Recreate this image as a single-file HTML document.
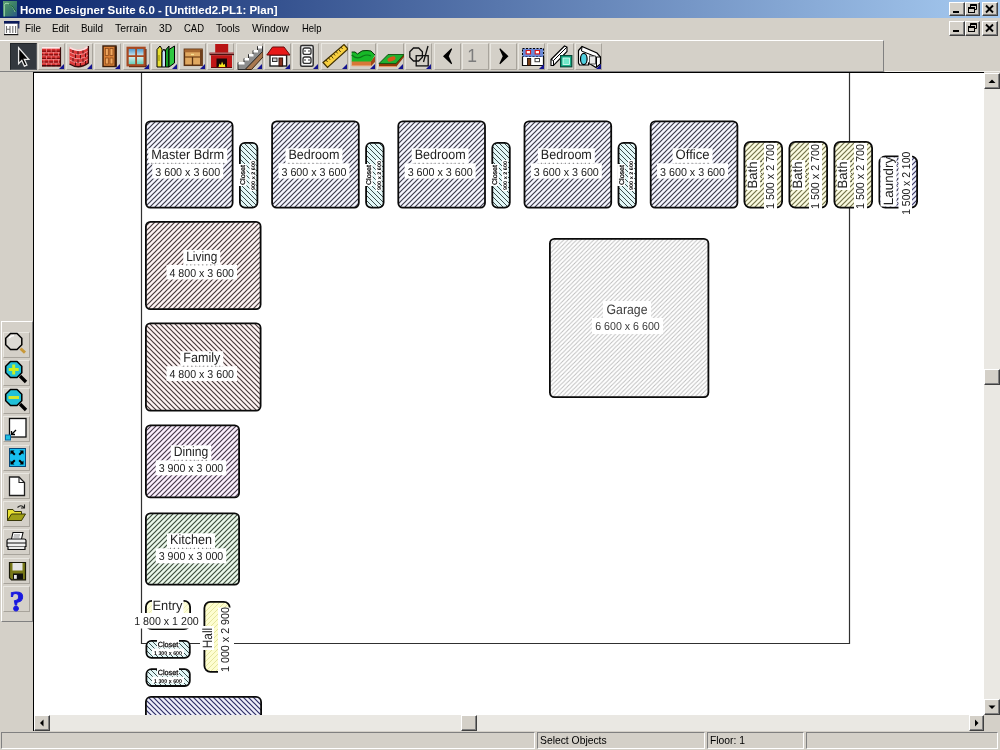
<!DOCTYPE html>
<html><head><meta charset="utf-8"><title>Home Designer Suite 6.0 - [Untitled2.PL1: Plan]</title>
<style>
*{box-sizing:border-box;margin:0;padding:0}
html,body{width:1000px;height:750px;overflow:hidden;background:#d4d0c8;font-family:"Liberation Sans",sans-serif;}
#app{position:relative;width:1000px;height:750px;overflow:hidden;background:#d4d0c8}
#canvas svg text{text-rendering:geometricPrecision}
#canvas svg,#menu,#title .t,#status,.b svg,.lb svg{will-change:transform}
.abs{position:absolute}
#title{left:0;top:0;width:1000px;height:18px;background:linear-gradient(to right,#0a246a 0%,#a6caf0 100%)}
#title .t{position:absolute;left:20px;top:1.5px;color:#fff;font-weight:bold;font-size:11.5px;line-height:16px;white-space:nowrap;letter-spacing:0px}
.cb{position:absolute;width:15px;height:14px;background:#d4d0c8;border:1px solid;border-color:#fff #404040 #404040 #fff;box-shadow:inset -1px -1px 0 #808080}
#menu{left:0;top:19px;width:1000px;height:21px;background:#d4d0c8}
#menu span{position:absolute;top:3px;font-size:11px;line-height:13px;color:#000;white-space:nowrap;transform-origin:0 0;display:inline-block}
#tb{left:0;top:40px;width:884px;height:32px;background:#d4d0c8;border-top:1px solid #fff;border-right:1px solid #808080;border-bottom:1px solid #808080}
.b{position:absolute;top:43px;width:27px;height:27px;border:1px solid;border-color:#e8e6e0 #a8a49c #a8a49c #e8e6e0}
.b svg{position:absolute;left:0;top:0}
.tri{position:absolute;right:0;bottom:0;width:0;height:0;border-left:5px solid transparent;border-bottom:5px solid #141490}
#left{left:0;top:72px;width:33px;height:661px;background:#d4d0c8}
#ltb{left:1px;top:321px;width:32px;height:301px;border:1px solid;border-color:#fff #808080 #808080 #fff;background:#d4d0c8}
.lb{position:absolute;left:4px;width:27px;height:26px;border:1px solid;border-color:#e8e6e0 #a8a49c #a8a49c #e8e6e0}
#canvas{left:33px;top:72px;width:951px;height:643px;background:#fff;border-left:1px solid #000;border-top:1px solid #000;overflow:hidden}
.sbtrack{background:#eae8e3}
.sbbtn{position:absolute;background:#d4d0c8;border:1px solid;border-color:#fff #404040 #404040 #fff;box-shadow:inset -1px -1px 0 #808080}
#status{left:0;top:731px;width:1000px;height:19px;background:#d4d0c8}
.pane{position:absolute;top:1px;height:17px;border:1px solid;border-color:#808080 #fff #fff #808080;font-size:11px;line-height:13px;padding-left:2px;padding-top:1px;color:#000;white-space:nowrap}
.pane span{display:inline-block;transform-origin:0 0;transform:scaleX(.94)}
</style></head><body><div id="app">
<div id="title" class="abs"><svg width="14" height="16" viewBox="0 0 14 16" style="position:absolute;left:3px;top:1px"><defs><linearGradient id="ga" x1="0" y1="0" x2="1" y2="1"><stop offset="0" stop-color="#5c9c70"/><stop offset=".5" stop-color="#3c8068"/><stop offset="1" stop-color="#2c5888"/></linearGradient></defs><rect x="0" y="0" width="14" height="15.5" fill="url(#ga)"/><path d="M1.3,15.5 V4.5 Q1.3,2 4,2.2 Q9.5,3 12.2,11" fill="none" stroke="#a0d8a8" stroke-width="1"/><path d="M6,2.8 Q10.5,5 12.8,10.5" fill="none" stroke="#0c5c28" stroke-width=".9"/></svg><div class="t">Home Designer Suite 6.0 - [Untitled2.PL1: Plan]</div></div>
<div class="cb" style="left:949px;top:2px;width:16px;height:14px"><svg width="13" height="12" viewBox="0 0 13 12" style="position:absolute;left:0;top:0"><rect x="3" y="8" width="6" height="2" fill="#000"/></svg></div><div class="cb" style="left:965px;top:2px;width:15px;height:14px"><svg width="13" height="12" viewBox="0 0 13 12" style="position:absolute;left:0;top:0"><path d="M4.5,1.5 H10.5 V6.5 H8 M4.5,1.5 V4" fill="none" stroke="#000" stroke-width="1"/><path d="M4.5,2 H10.5" stroke="#000" stroke-width="2"/><rect x="2.5" y="4.5" width="6" height="5" fill="none" stroke="#000" stroke-width="1"/><path d="M2.5,5 H8.5" stroke="#000" stroke-width="2"/></svg></div><div class="cb" style="left:982px;top:2px;width:16px;height:14px"><svg width="13" height="12" viewBox="0 0 13 12" style="position:absolute;left:0;top:0"><path d="M3,2.5 L10,9.5 M10,2.5 L3,9.5" stroke="#000" stroke-width="1.9"/></svg></div>
<div id="menu" class="abs"><svg width="16" height="15" viewBox="0 0 16 15" style="position:absolute;left:4px;top:2.3px"><rect x="0.5" y="2" width="13" height="11.5" fill="#fff" stroke="#b0b0b0" stroke-width="1"/><rect x="0" y="0" width="15.3" height="2.6" fill="#0a1a5a"/><rect x="14" y="0" width="1.3" height="7.5" fill="#0a1a5a"/><path d="M13.8,3 V13 " stroke="#909090" stroke-width="1" fill="none"/><path d="M0,13.6 H14.3" stroke="#181818" stroke-width="1.2"/><path d="M2.5,5 v7 M2.5,8.2 h3.5 M6,5 v7 M8.8,5 v7 M11.6,5 v7" stroke="#707070" stroke-width="1.1" fill="none"/></svg><span style="left:24.5px;transform:scaleX(0.903)">File</span><span style="left:52px;transform:scaleX(0.896)">Edit</span><span style="left:81px;transform:scaleX(0.899)">Build</span><span style="left:115px;transform:scaleX(0.951)">Terrain</span><span style="left:159px;transform:scaleX(0.925)">3D</span><span style="left:184px;transform:scaleX(0.861)">CAD</span><span style="left:216px;transform:scaleX(0.934)">Tools</span><span style="left:252px;transform:scaleX(0.946)">Window</span><span style="left:301.5px;transform:scaleX(0.862)">Help</span></div>
<div class="cb" style="left:949px;top:21px;width:16px;height:15px"><svg width="13" height="12" viewBox="0 0 13 12" style="position:absolute;left:0;top:0"><rect x="3" y="8" width="6" height="2" fill="#000"/></svg></div><div class="cb" style="left:965px;top:21px;width:15px;height:15px"><svg width="13" height="12" viewBox="0 0 13 12" style="position:absolute;left:0;top:0"><path d="M4.5,1.5 H10.5 V6.5 H8 M4.5,1.5 V4" fill="none" stroke="#000" stroke-width="1"/><path d="M4.5,2 H10.5" stroke="#000" stroke-width="2"/><rect x="2.5" y="4.5" width="6" height="5" fill="none" stroke="#000" stroke-width="1"/><path d="M2.5,5 H8.5" stroke="#000" stroke-width="2"/></svg></div><div class="cb" style="left:982px;top:21px;width:16px;height:15px"><svg width="13" height="12" viewBox="0 0 13 12" style="position:absolute;left:0;top:0"><path d="M3,2.5 L10,9.5 M10,2.5 L3,9.5" stroke="#000" stroke-width="1.9"/></svg></div>
<div id="tb" class="abs"></div>
<div class="b" style="left:10px;background:#33383e;border-color:#202428 #585c60 #585c60 #202428"><svg width="27" height="27" viewBox="0 0 27 27" style="position:absolute;left:-1px;top:-1px"><path d="M8.6,4.7 V20.6 L11.8,17.4 L14.4,23.2 L16.9,22.1 L14.3,16.3 H18.8 Z" fill="#000" stroke="#e8e8e8" stroke-width="1.3" stroke-linejoin="miter"/></svg></div><div class="b" style="left:38px"><svg width="27" height="27" viewBox="0 0 27 27" style="position:absolute;left:-1px;top:-1px"><rect x="4" y="4.2" width="19" height="19" fill="#f08c8c"/><rect x="4" y="4.2" width="19" height="1.2" fill="#fff"/><rect x="4.00" y="5.90" width="4.00" height="2.90" fill="#d83030"/><rect x="4.00" y="7.60" width="4.00" height="1.2" fill="#7a0c0c"/><rect x="8.80" y="5.90" width="4.00" height="2.90" fill="#d83030"/><rect x="8.80" y="7.60" width="4.00" height="1.2" fill="#7a0c0c"/><rect x="13.60" y="5.90" width="4.00" height="2.90" fill="#d83030"/><rect x="13.60" y="7.60" width="4.00" height="1.2" fill="#7a0c0c"/><rect x="18.40" y="5.90" width="4.00" height="2.90" fill="#d83030"/><rect x="18.40" y="7.60" width="4.00" height="1.2" fill="#7a0c0c"/><rect x="4.00" y="9.50" width="1.60" height="2.90" fill="#d83030"/><rect x="4.00" y="11.20" width="1.60" height="1.2" fill="#7a0c0c"/><rect x="6.40" y="9.50" width="4.00" height="2.90" fill="#d83030"/><rect x="6.40" y="11.20" width="4.00" height="1.2" fill="#7a0c0c"/><rect x="11.20" y="9.50" width="4.00" height="2.90" fill="#d83030"/><rect x="11.20" y="11.20" width="4.00" height="1.2" fill="#7a0c0c"/><rect x="16.00" y="9.50" width="4.00" height="2.90" fill="#d83030"/><rect x="16.00" y="11.20" width="4.00" height="1.2" fill="#7a0c0c"/><rect x="20.80" y="9.50" width="2.20" height="2.90" fill="#d83030"/><rect x="20.80" y="11.20" width="2.20" height="1.2" fill="#7a0c0c"/><rect x="4.00" y="13.10" width="4.00" height="2.90" fill="#d83030"/><rect x="4.00" y="14.80" width="4.00" height="1.2" fill="#7a0c0c"/><rect x="8.80" y="13.10" width="4.00" height="2.90" fill="#d83030"/><rect x="8.80" y="14.80" width="4.00" height="1.2" fill="#7a0c0c"/><rect x="13.60" y="13.10" width="4.00" height="2.90" fill="#d83030"/><rect x="13.60" y="14.80" width="4.00" height="1.2" fill="#7a0c0c"/><rect x="18.40" y="13.10" width="4.00" height="2.90" fill="#d83030"/><rect x="18.40" y="14.80" width="4.00" height="1.2" fill="#7a0c0c"/><rect x="4.00" y="16.70" width="1.60" height="2.90" fill="#d83030"/><rect x="4.00" y="18.40" width="1.60" height="1.2" fill="#7a0c0c"/><rect x="6.40" y="16.70" width="4.00" height="2.90" fill="#d83030"/><rect x="6.40" y="18.40" width="4.00" height="1.2" fill="#7a0c0c"/><rect x="11.20" y="16.70" width="4.00" height="2.90" fill="#d83030"/><rect x="11.20" y="18.40" width="4.00" height="1.2" fill="#7a0c0c"/><rect x="16.00" y="16.70" width="4.00" height="2.90" fill="#d83030"/><rect x="16.00" y="18.40" width="4.00" height="1.2" fill="#7a0c0c"/><rect x="20.80" y="16.70" width="2.20" height="2.90" fill="#d83030"/><rect x="20.80" y="18.40" width="2.20" height="1.2" fill="#7a0c0c"/><rect x="4.00" y="20.30" width="4.00" height="2.90" fill="#d83030"/><rect x="4.00" y="22.00" width="4.00" height="1.2" fill="#7a0c0c"/><rect x="8.80" y="20.30" width="4.00" height="2.90" fill="#d83030"/><rect x="8.80" y="22.00" width="4.00" height="1.2" fill="#7a0c0c"/><rect x="13.60" y="20.30" width="4.00" height="2.90" fill="#d83030"/><rect x="13.60" y="22.00" width="4.00" height="1.2" fill="#7a0c0c"/><rect x="18.40" y="20.30" width="4.00" height="2.90" fill="#d83030"/><rect x="18.40" y="22.00" width="4.00" height="1.2" fill="#7a0c0c"/><path d="M22.5,4.2 V23.2 M4,22.8 H23" stroke="#3a0a0a" stroke-width="1.2"/></svg><i class="tri"></i></div><div class="b" style="left:66px"><svg width="27" height="27" viewBox="0 0 27 27" style="position:absolute;left:-1px;top:-1px"><path d="M3.5,4 Q13,10 22.4,3 V20 Q13,27 3.5,21 Z" fill="#de3c3c"/><path d="M3.5,4.6 Q13,10.6 22.4,3.6" fill="none" stroke="#fde0e0" stroke-width="1.8"/><path d="M3.5,9 Q13,15 22.4,8 M3.5,13 Q13,19 22.4,12 M3.5,17 Q13,23 22.4,16" fill="none" stroke="#f4a0a0" stroke-width=".9"/><path d="M7,7 v3 M12,8 v3.5 M17,7.5 v3 M9.5,11.5 v3.5 M14.5,12 v3.5 M19.5,10.5 v3.5 M7,15 v3.5 M12,16.5 v3.5 M17,15.5 v3.5 M9.5,19.5 v3 M14.5,20 v3 M19.5,18 v3.5" stroke="#5a1010" stroke-width="1"/><path d="M22.4,3 V20 Q13,27 3.5,21" fill="none" stroke="#3a0a0a" stroke-width="1.3"/></svg><i class="tri"></i></div><div class="b" style="left:94px"><svg width="27" height="27" viewBox="0 0 27 27" style="position:absolute;left:-1px;top:-1px"><rect x="9" y="3" width="13" height="20.5" fill="#d88038" stroke="#3a1c08" stroke-width="1.4"/><rect x="20.5" y="3.5" width="2.2" height="20" fill="#3a1c08"/><rect x="11.3" y="5.5" width="3" height="7" fill="#f0a860" stroke="#8a4818" stroke-width=".8"/><rect x="16" y="5.5" width="3" height="7" fill="#f0a860" stroke="#8a4818" stroke-width=".8"/><rect x="11.3" y="15" width="3" height="6" fill="#f0a860" stroke="#8a4818" stroke-width=".8"/><rect x="16" y="15" width="3" height="6" fill="#f0a860" stroke="#8a4818" stroke-width=".8"/></svg><i class="tri"></i></div><div class="b" style="left:123px"><svg width="27" height="27" viewBox="0 0 27 27" style="position:absolute;left:-1px;top:-1px"><defs><linearGradient id="gw" x1="0" y1="0" x2="0" y2="1"><stop offset="0" stop-color="#3c8cc8"/><stop offset=".5" stop-color="#d8f0f0"/><stop offset="1" stop-color="#58c8b0"/></linearGradient></defs><rect x="6" y="22" width="17.5" height="2.2" fill="#4a1c08"/><rect x="21.5" y="6" width="2" height="17" fill="#4a1c08"/><rect x="4.6" y="4.8" width="17" height="17.5" fill="url(#gw)" stroke="#a84820" stroke-width="2.2"/><path d="M13.1,5 V22 M5,13.2 H21.5" stroke="#a84820" stroke-width="1.8"/></svg><i class="tri"></i></div><div class="b" style="left:151px"><svg width="27" height="27" viewBox="0 0 27 27" style="position:absolute;left:-1px;top:-1px"><path d="M6,6.5 L9,3 L11,6 V24 H6 Z" fill="#e8e030" stroke="#000" stroke-width="1"/><path d="M11,9 L13,6 L14.5,9 V24 H11 Z" fill="#c8e0f8" stroke="#000" stroke-width="1"/><path d="M14.5,7 L18,3 V24 H14.5 Z" fill="#18a028" stroke="#000" stroke-width="1"/><path d="M18,6.5 L23.5,3 V20 L18,24 Z" fill="#30c840" stroke="#000" stroke-width="1"/><path d="M8,12 v6" stroke="#a09810" stroke-width="1.2"/></svg><i class="tri"></i></div><div class="b" style="left:179px"><svg width="27" height="27" viewBox="0 0 27 27" style="position:absolute;left:-1px;top:-1px"><rect x="5.4" y="6.3" width="17.6" height="16" fill="#e0a860" stroke="#5a3010" stroke-width="1.5"/><rect x="5.4" y="6.3" width="17.6" height="3" fill="#a86830"/><rect x="21" y="7" width="2.6" height="15.5" fill="#70401c"/><path d="M6,14 H21" stroke="#7a4818" stroke-width="1.3"/><path d="M13.5,14 V22" stroke="#5a3010" stroke-width="1.3"/><path d="M12,11.5 h3" stroke="#f8e090" stroke-width="1.3"/></svg><i class="tri"></i></div><div class="b" style="left:207px"><svg width="27" height="27" viewBox="0 0 27 27" style="position:absolute;left:-1px;top:-1px"><rect x="8.2" y="1" width="13" height="9" fill="#b81414"/><rect x="2.5" y="9.6" width="24.5" height="2.6" fill="#4a1010"/><rect x="3" y="9.6" width="24" height="1" fill="#e89090"/><rect x="4" y="12.2" width="21" height="12.5" fill="#c01616"/><rect x="9.5" y="15.5" width="10.5" height="9.2" fill="#180808"/><path d="M11.5,24 L12.5,20.5 L14,22 L15,18.5 L16.5,22 L17.8,20.8 L18.3,24 Z" fill="#f8e820"/><path d="M4,24.5 H25" stroke="#5a0808" stroke-width="1"/></svg></div><div class="b" style="left:236px"><svg width="27" height="27" viewBox="0 0 27 27" style="position:absolute;left:-1px;top:-1px"><path d="M9,26.5 L27,8 V14 L15.5,26.5 Z" fill="#a87850" stroke="#3a2410" stroke-width="1"/><path d="M2,19.5 H8 V15.5 H12.5 V11.5 H17 V7.5 H21.5 V3.5 H26.5 V8.5 L9,26.5 H2 Z" fill="#8c8c8c" stroke="#303030" stroke-width="1"/><path d="M2.5,20.2 H8.5 M8.5,16.2 H13 M13,12.2 H17.5 M17.5,8.2 H22 M22,4.2 H26" stroke="#fff" stroke-width="2.4"/></svg><i class="tri"></i></div><div class="b" style="left:264px"><svg width="27" height="27" viewBox="0 0 27 27" style="position:absolute;left:-1px;top:-1px"><rect x="6" y="12" width="16.6" height="11" fill="#fff" stroke="#202020" stroke-width="1.4"/><path d="M2.8,12 L8.5,4 H20 L26,12 Z" fill="#e81818" stroke="#6a0808" stroke-width="1"/><rect x="15" y="15" width="3.6" height="8" fill="#8a3020" stroke="#301008" stroke-width="1"/><rect x="8.5" y="15" width="4.5" height="3.5" fill="#d0d0d0" stroke="#303030" stroke-width="1"/></svg><i class="tri"></i></div><div class="b" style="left:292px"><svg width="27" height="27" viewBox="0 0 27 27" style="position:absolute;left:-1px;top:-1px"><rect x="8.6" y="2.6" width="12.6" height="20.6" rx="1.5" fill="#f4f4f4" stroke="#303030" stroke-width="1.5"/><rect x="11" y="5" width="8" height="6.4" rx="2" fill="#fff" stroke="#303030" stroke-width="1.3"/><rect x="11" y="14" width="8" height="6.4" rx="2" fill="#fff" stroke="#303030" stroke-width="1.3"/><path d="M13,7 v2 M17,7 v2 M13,16 v2 M17,16 v2" stroke="#303030" stroke-width="1"/></svg><i class="tri"></i></div><div class="b" style="left:321px"><svg width="27" height="27" viewBox="0 0 27 27" style="position:absolute;left:-1px;top:-1px"><path d="M2,19.5 L23,1.5 L27,6 L6.5,24.5 Z" fill="#f8d040" stroke="#403000" stroke-width="1.2"/><path d="M5,17 l1.6,2 M7.5,14.8 l1.6,2 M10,12.6 l2.2,2.8 M12.5,10.5 l1.6,2 M15,8.4 l1.6,2 M17.5,6.2 l2.2,2.8 M20,4 l1.6,2" stroke="#403000" stroke-width=".9"/></svg><i class="tri"></i></div><div class="b" style="left:349px"><svg width="27" height="27" viewBox="0 0 27 27" style="position:absolute;left:-1px;top:-1px"><path d="M2.7,18 H22 L26,14 V18 L22,23 H2.7 Z" fill="#d87838"/><path d="M22,18 L26,13 V19 L22,23 Z" fill="#a04818"/><path d="M2.7,9 L6,9 L8.5,11 Q13,6.5 18,7.5 L22,8 L26,12 L22,18.5 H2.7 Z" fill="#18b828"/><path d="M2.7,9 L6,9 L8.5,11 Q13,6.5 18,7.5 L22,8 L26,12" fill="none" stroke="#083808" stroke-width="1"/><path d="M2.7,12 Q8,17 14,13 Q18,11 22,13" fill="none" stroke="#0c7818" stroke-width="1.2"/><path d="M2.7,22.8 H22" stroke="#e8a880" stroke-width="1"/></svg><i class="tri"></i></div><div class="b" style="left:377px"><svg width="27" height="27" viewBox="0 0 27 27" style="position:absolute;left:-1px;top:-1px"><path d="M2,21 L11,11.5 H27 V14 L19,24 H2 Z" fill="#903808"/><path d="M2,20.5 L11,11.5 H27 L19,20.5 Z" fill="#20b030" stroke="#085010" stroke-width=".8"/><ellipse cx="14.5" cy="16" rx="4.2" ry="2.2" fill="#d85818" transform="rotate(-20 14.5 16)"/><path d="M2,23.6 H19" stroke="#f0a070" stroke-width="1"/></svg><i class="tri"></i></div><div class="b" style="left:405px"><svg width="27" height="27" viewBox="0 0 27 27" style="position:absolute;left:-1px;top:-1px"><path d="M8.5,5 H13.7 L17.4,8.7 V14.3 L13.7,18 H8.5 L4.8,14.3 V8.7 Z" fill="none" stroke="#101010" stroke-width="1.3"/><rect x="11.2" y="12.7" width="12" height="10.2" fill="none" stroke="#101010" stroke-width="1.3"/><path d="M23,3 L18.5,19" stroke="#101010" stroke-width="1.3"/></svg><i class="tri"></i></div><div class="b" style="left:434px"><svg width="27" height="27" viewBox="0 0 27 27" style="position:absolute;left:-1px;top:-1px"><path d="M9,13.2 L17.4,5.3 L18.1,6 L14.8,13.2 L18.1,20.5 L17.4,21.2 Z" fill="#000"/></svg></div><div class="b" style="left:462px"><svg width="27" height="27" viewBox="0 0 27 27" style="position:absolute;left:-1px;top:-1px"><text x="10.2" y="19" font-size="17.5" text-anchor="middle" fill="#7c7c7c" font-family="Liberation Sans, sans-serif">1</text></svg></div><div class="b" style="left:490px"><svg width="27" height="27" viewBox="0 0 27 27" style="position:absolute;left:-1px;top:-1px"><path d="M18.5,13.2 L10.1,5.3 L9.4,6 L12.7,13.2 L9.4,20.5 L10.1,21.2 Z" fill="#000"/></svg></div><div class="b" style="left:518px"><svg width="27" height="27" viewBox="0 0 27 27" style="position:absolute;left:-1px;top:-1px"><rect x="4.5" y="5.5" width="21" height="8.5" fill="#6888d8" stroke="#000" stroke-width="1" stroke-dasharray="2 1.5"/><rect x="4.5" y="14" width="21" height="8.5" fill="#fff"/><path d="M4.5,14 V22.5 H25.5 V14" fill="none" stroke="#101010" stroke-width="1.2"/><rect x="8.2" y="7.5" width="4.3" height="3.4" fill="#fff" stroke="#d81818" stroke-width="1.1"/><rect x="17.2" y="7.5" width="4.3" height="3.4" fill="#fff" stroke="#d81818" stroke-width="1.1"/><rect x="9.5" y="15.5" width="3.2" height="7" fill="#7a4018" stroke="#201008" stroke-width=".9"/><rect x="17" y="15.5" width="4.5" height="3.2" fill="#fff" stroke="#404040" stroke-width="1"/></svg><i class="tri"></i></div><div class="b" style="left:547px"><svg width="27" height="27" viewBox="0 0 27 27" style="position:absolute;left:-1px;top:-1px"><path d="M4,16.5 L17.5,3 L20,4 V8.5 L6.5,22.5 H4 Z" fill="#fff" stroke="#000" stroke-width="1.1"/><path d="M6.5,22.5 V17.5 L20,4 M4,16.5 L6.5,17.5" fill="none" stroke="#000" stroke-width="1"/><rect x="13.6" y="12.6" width="11.2" height="11.2" fill="#18b088" stroke="#084838" stroke-width="1.2"/><rect x="16" y="15" width="6.4" height="6.4" fill="#70e8c8" stroke="#e8fff8" stroke-width=".8"/></svg></div><div class="b" style="left:575px"><svg width="27" height="27" viewBox="0 0 27 27" style="position:absolute;left:-1px;top:-1px"><path d="M3.5,7.5 L7,3.5 L22,10 L25.5,14 V21 L21,24.5 L13.5,20 V22 H4.5 L3.5,20 Z" fill="#fff" stroke="#000" stroke-width="1.2"/><path d="M7,3.5 L6.5,8 L21.5,14 L25.5,14 M21.5,14 V24" fill="none" stroke="#000" stroke-width="1"/><rect x="14.5" y="13" width="6" height="8" fill="#e8e8e8" stroke="#303030" stroke-width=".8"/><ellipse cx="8.8" cy="16" rx="3.3" ry="5.6" fill="#50d0e0" stroke="#000" stroke-width="1.2"/></svg><i class="tri"></i></div>
<div id="left" class="abs"><div id="ltb" class="abs" style="top:249px"><div class="lb" style="top:10px;left:1px"><svg width="26" height="26" viewBox="0 0 26 26" style="position:absolute;left:0px;top:-1px"><path d="M16.5,16.5 L21,20.6" stroke="#c89838" stroke-width="3"/><path d="M6.5,1.5 H13 L17.8,6.3 V12.7 L13,17.5 H6.5 L1.7,12.7 V6.3 Z" fill="#dcdad4" stroke="#000" stroke-width="1.5"/><path d="M5,6 Q7,3.5 10,3.5" stroke="#fff" stroke-width="1.5" fill="none"/></svg></div><div class="lb" style="top:38px;left:1px"><svg width="26" height="26" viewBox="0 0 26 26" style="position:absolute;left:0px;top:-1px"><path d="M16,16 L22,22" stroke="#000" stroke-width="3.4"/><path d="M6.5,1.5 H13 L17.8,6.3 V12.7 L13,17.5 H6.5 L1.7,12.7 V6.3 Z" fill="#20c0d8" stroke="#000" stroke-width="1.5"/><path d="M9.7,4.5 V14.5 M4.7,9.5 H14.7" stroke="#c8f020" stroke-width="3"/></svg></div><div class="lb" style="top:66px;left:1px"><svg width="26" height="26" viewBox="0 0 26 26" style="position:absolute;left:0px;top:-1px"><path d="M16,16 L22,22" stroke="#000" stroke-width="3.4"/><path d="M6.5,1.5 H13 L17.8,6.3 V12.7 L13,17.5 H6.5 L1.7,12.7 V6.3 Z" fill="#20c0d8" stroke="#000" stroke-width="1.5"/><path d="M4.5,9.5 H15" stroke="#d0e830" stroke-width="3"/></svg></div><div class="lb" style="top:94px;left:1px"><svg width="26" height="26" viewBox="0 0 26 26" style="position:absolute;left:0px;top:-1px"><rect x="5.5" y="2.5" width="16.5" height="18.5" fill="#fff" stroke="#101010" stroke-width="1.3"/><rect x="1.5" y="19" width="5" height="5" fill="#20c0e0" stroke="#0868a0" stroke-width="1"/><path d="M12,14 L7.5,18.5 M7.5,15 V18.5 H11" stroke="#000" stroke-width="1.3" fill="none"/></svg></div><div class="lb" style="top:123px;left:1px"><svg width="26" height="26" viewBox="0 0 26 26" style="position:absolute;left:0px;top:-1px"><rect x="5.5" y="3.5" width="16" height="18" fill="#18c0f0" stroke="#084878" stroke-width="1"/><path d="M6.5,5.5 h4 l-1.3,1.3 l2.3,2.3 l-1.4,1.4 l-2.3,-2.3 l-1.3,1.3 Z M19.5,5.5 v4 l-1.3,-1.3 l-2.3,2.3 l-1.4,-1.4 l2.3,-2.3 l-1.3,-1.3 Z M6.5,19.5 v-4 l1.3,1.3 l2.3,-2.3 l1.4,1.4 l-2.3,2.3 l1.3,1.3 Z M19.5,19.5 h-4 l1.3,-1.3 l-2.3,-2.3 l1.4,-1.4 l2.3,2.3 l1.3,-1.3 Z" fill="#000"/></svg></div><div class="lb" style="top:151px;left:1px"><svg width="26" height="26" viewBox="0 0 26 26" style="position:absolute;left:0px;top:-1px"><path d="M5.5,4 H15 L20.5,9.5 V22.5 H5.5 Z" fill="#fff" stroke="#202020" stroke-width="1.3"/><path d="M15,4 V9.5 H20.5" fill="none" stroke="#202020" stroke-width="1.1"/></svg></div><div class="lb" style="top:179px;left:1px"><svg width="26" height="26" viewBox="0 0 26 26" style="position:absolute;left:0px;top:-1px"><path d="M3.5,8.5 H9 L10.5,10.5 H17.5 V19.5 H3.5 Z" fill="#e8e030" stroke="#383808" stroke-width="1"/><path d="M3.5,19.5 L7.5,13 H21.5 L17.5,19.5 Z" fill="#a0a018" stroke="#383808" stroke-width="1"/><path d="M13.5,6.5 Q17,3 20,6.5 M20.5,3.5 V7 H17" fill="none" stroke="#202020" stroke-width="1.1"/></svg></div><div class="lb" style="top:207px;left:1px"><svg width="26" height="26" viewBox="0 0 26 26" style="position:absolute;left:0px;top:-1px"><path d="M7.5,10 L9,3.5 H19 L17.5,10" fill="#fff" stroke="#101010" stroke-width="1.1"/><path d="M10,6 h6 M9.5,8 h6" stroke="#808080" stroke-width=".9"/><path d="M3,11.5 Q3,10 5,10 H20 Q22,10 22,11.5 V17.5 H3 Z" fill="#f0f0f0" stroke="#101010" stroke-width="1.2"/><path d="M3,14 H22" stroke="#101010" stroke-width="1"/><path d="M4,17.5 V20.5 H21 V17.5" fill="#d8d8d8" stroke="#101010" stroke-width="1.2"/><path d="M5,19 H20" stroke="#fff" stroke-width="1"/></svg></div><div class="lb" style="top:236px;left:1px"><svg width="26" height="26" viewBox="0 0 26 26" style="position:absolute;left:0px;top:-1px"><path d="M5.5,4.5 H21.5 V21.8 H7.5 L5.5,19.8 Z" fill="#787818" stroke="#181808" stroke-width="1.2"/><rect x="8.5" y="5" width="10" height="7.5" fill="#e4e4e4"/><rect x="9" y="15.5" width="10" height="6" fill="#101010"/><rect x="10" y="17" width="2.8" height="3.8" fill="#e8e8e8"/></svg></div><div class="lb" style="top:264px;left:1px"><svg width="26" height="26" viewBox="0 0 26 26" style="position:absolute;left:0px;top:-1px"><text x="13" y="24.5" font-size="30" font-weight="bold" text-anchor="middle" fill="#1818e0" stroke="#1818e0" stroke-width=".9" font-family="Liberation Serif, serif">?</text></svg></div></div></div>
<div id="canvas" class="abs"><svg class="abs" style="left:0;top:0" width="950" height="642" viewBox="0 0 950 642" font-family='"Liberation Sans", sans-serif'><defs><pattern id="hBed" width="5.0" height="5.0" patternUnits="userSpaceOnUse"><rect width="5.0" height="5.0" fill="#f5f5fe"/><path d="M-5.0,5.0 L5.0,-5.0 M0,5.0 L5.0,0 M0,10.0 L10.0,0" stroke="#3c3c4a" stroke-width="1.2" fill="none"/></pattern><pattern id="hClo" width="5.0" height="5.0" patternUnits="userSpaceOnUse"><rect width="5.0" height="5.0" fill="#e2f7f7"/><path d="M-5.0,-5.0 L5.0,5.0 M0,0 L5.0,5.0 M-5.0,0 L5.0,10.0 M0,-5.0 L10.0,5.0" stroke="#3c4c4c" stroke-width="1.0" fill="none"/></pattern><pattern id="hBath" width="5.0" height="5.0" patternUnits="userSpaceOnUse"><rect width="5.0" height="5.0" fill="#fbfbe0"/><path d="M-5.0,5.0 L5.0,-5.0 M0,5.0 L5.0,0 M0,10.0 L10.0,0" stroke="#74744c" stroke-width="1.2" fill="none"/></pattern><pattern id="hLiv" width="5.0" height="5.0" patternUnits="userSpaceOnUse"><rect width="5.0" height="5.0" fill="#fef3f3"/><path d="M-5.0,5.0 L5.0,-5.0 M0,5.0 L5.0,0 M0,10.0 L10.0,0" stroke="#463a3a" stroke-width="1.2" fill="none"/></pattern><pattern id="hFam" width="5.0" height="5.0" patternUnits="userSpaceOnUse"><rect width="5.0" height="5.0" fill="#fef3f3"/><path d="M-5.0,-5.0 L5.0,5.0 M0,0 L5.0,5.0 M-5.0,0 L5.0,10.0 M0,-5.0 L10.0,5.0" stroke="#463a3a" stroke-width="1.2" fill="none"/></pattern><pattern id="hDin" width="5.0" height="5.0" patternUnits="userSpaceOnUse"><rect width="5.0" height="5.0" fill="#fbeffd"/><path d="M-5.0,5.0 L5.0,-5.0 M0,5.0 L5.0,0 M0,10.0 L10.0,0" stroke="#463a4a" stroke-width="1.2" fill="none"/></pattern><pattern id="hKit" width="5.0" height="5.0" patternUnits="userSpaceOnUse"><rect width="5.0" height="5.0" fill="#eaf7ea"/><path d="M-5.0,5.0 L5.0,-5.0 M0,5.0 L5.0,0 M0,10.0 L10.0,0" stroke="#3e4e3e" stroke-width="1.2" fill="none"/></pattern><pattern id="hGar" width="4.3" height="4.3" patternUnits="userSpaceOnUse"><rect width="4.3" height="4.3" fill="#ffffff"/><path d="M-4.3,4.3 L4.3,-4.3 M0,4.3 L4.3,0 M0,8.6 L8.6,0" stroke="#bcbcbc" stroke-width="0.9" fill="none"/></pattern><pattern id="hHall" width="5.0" height="5.0" patternUnits="userSpaceOnUse"><rect width="5.0" height="5.0" fill="#fdfdd0"/><path d="M-5.0,5.0 L5.0,-5.0 M0,5.0 L5.0,0 M0,10.0 L10.0,0" stroke="#e4e49c" stroke-width="1.0" fill="none"/></pattern><pattern id="hEnt" width="5.0" height="5.0" patternUnits="userSpaceOnUse"><rect width="5.0" height="5.0" fill="#fdfdd8"/><path d="M-5.0,5.0 L5.0,-5.0 M0,5.0 L5.0,0 M0,10.0 L10.0,0" stroke="#eeeeb8" stroke-width="1.0" fill="none"/></pattern><pattern id="hBot" width="5.0" height="5.0" patternUnits="userSpaceOnUse"><rect width="5.0" height="5.0" fill="#eeeefa"/><path d="M-5.0,-5.0 L5.0,5.0 M0,0 L5.0,5.0 M-5.0,0 L5.0,10.0 M0,-5.0 L10.0,5.0" stroke="#2c2c64" stroke-width="1.2" fill="none"/></pattern><pattern id="hLau" width="5.0" height="5.0" patternUnits="userSpaceOnUse"><rect width="5.0" height="5.0" fill="#eeeefa"/><path d="M-5.0,5.0 L5.0,-5.0 M0,5.0 L5.0,0 M0,10.0 L10.0,0" stroke="#3c3c68" stroke-width="1.2" fill="none"/></pattern></defs><path d="M107.5,0 V570.5 H815.5 V0" fill="none" stroke="#303030" stroke-width="1.2"/><rect x="111.90" y="48.40" width="86.70" height="86.20" rx="4.5" ry="4.5" fill="url(#hBed)" stroke="#0a0a0a" stroke-width="1.8"/><rect x="114.25" y="75.30" width="79.00" height="15.00" fill="#fff"/><rect x="118.25" y="90.30" width="71.00" height="15.30" fill="#fff"/><line x1="117.25" y1="90.30" x2="190.25" y2="90.30" stroke="#666" stroke-width="1" stroke-dasharray="1 3"/><text x="153.75" y="86.30" text-anchor="middle" font-size="13.5" fill="#222" textLength="73" lengthAdjust="spacingAndGlyphs">Master Bdrm</text><text x="153.75" y="102.60" text-anchor="middle" font-size="11.5" fill="#222" textLength="65" lengthAdjust="spacingAndGlyphs">3 600 x 3 600</text><rect x="238.10" y="48.40" width="86.70" height="86.20" rx="4.5" ry="4.5" fill="url(#hBed)" stroke="#0a0a0a" stroke-width="1.8"/><rect x="251.45" y="75.30" width="57.00" height="15.00" fill="#fff"/><rect x="244.45" y="90.30" width="71.00" height="15.30" fill="#fff"/><line x1="254.45" y1="90.30" x2="305.45" y2="90.30" stroke="#666" stroke-width="1" stroke-dasharray="1 3"/><text x="279.95" y="86.30" text-anchor="middle" font-size="13.5" fill="#222" textLength="51" lengthAdjust="spacingAndGlyphs">Bedroom</text><text x="279.95" y="102.60" text-anchor="middle" font-size="11.5" fill="#222" textLength="65" lengthAdjust="spacingAndGlyphs">3 600 x 3 600</text><rect x="364.30" y="48.40" width="86.70" height="86.20" rx="4.5" ry="4.5" fill="url(#hBed)" stroke="#0a0a0a" stroke-width="1.8"/><rect x="377.65" y="75.30" width="57.00" height="15.00" fill="#fff"/><rect x="370.65" y="90.30" width="71.00" height="15.30" fill="#fff"/><line x1="380.65" y1="90.30" x2="431.65" y2="90.30" stroke="#666" stroke-width="1" stroke-dasharray="1 3"/><text x="406.15" y="86.30" text-anchor="middle" font-size="13.5" fill="#222" textLength="51" lengthAdjust="spacingAndGlyphs">Bedroom</text><text x="406.15" y="102.60" text-anchor="middle" font-size="11.5" fill="#222" textLength="65" lengthAdjust="spacingAndGlyphs">3 600 x 3 600</text><rect x="490.50" y="48.40" width="86.70" height="86.20" rx="4.5" ry="4.5" fill="url(#hBed)" stroke="#0a0a0a" stroke-width="1.8"/><rect x="503.85" y="75.30" width="57.00" height="15.00" fill="#fff"/><rect x="496.85" y="90.30" width="71.00" height="15.30" fill="#fff"/><line x1="506.85" y1="90.30" x2="557.85" y2="90.30" stroke="#666" stroke-width="1" stroke-dasharray="1 3"/><text x="532.35" y="86.30" text-anchor="middle" font-size="13.5" fill="#222" textLength="51" lengthAdjust="spacingAndGlyphs">Bedroom</text><text x="532.35" y="102.60" text-anchor="middle" font-size="11.5" fill="#222" textLength="65" lengthAdjust="spacingAndGlyphs">3 600 x 3 600</text><rect x="616.70" y="48.40" width="86.70" height="86.20" rx="4.5" ry="4.5" fill="url(#hBed)" stroke="#0a0a0a" stroke-width="1.8"/><rect x="638.55" y="75.30" width="40.00" height="15.00" fill="#fff"/><rect x="623.05" y="90.30" width="71.00" height="15.30" fill="#fff"/><line x1="641.55" y1="90.30" x2="675.55" y2="90.30" stroke="#666" stroke-width="1" stroke-dasharray="1 3"/><text x="658.55" y="86.30" text-anchor="middle" font-size="13.5" fill="#222" textLength="34" lengthAdjust="spacingAndGlyphs">Office</text><text x="658.55" y="102.60" text-anchor="middle" font-size="11.5" fill="#222" textLength="65" lengthAdjust="spacingAndGlyphs">3 600 x 3 600</text><rect x="205.90" y="69.90" width="17.50" height="64.70" rx="5" ry="5" fill="url(#hClo)" stroke="#0a0a0a" stroke-width="1.8"/><rect x="204.50" y="91.00" width="8.00" height="22.00" fill="#fff"/><rect x="215.50" y="87.00" width="6.00" height="31.00" fill="#fff"/><text transform="translate(211.00,102.00) rotate(-90)" text-anchor="middle" font-size="6.8" fill="#000" textLength="20" lengthAdjust="spacingAndGlyphs" stroke="#000" stroke-width="0.25">Closet</text><text transform="translate(220.80,102.50) rotate(-90)" text-anchor="middle" font-size="5.2" fill="#000" textLength="29" lengthAdjust="spacingAndGlyphs" font-weight="bold">900 x 2 600</text><rect x="332.10" y="69.90" width="17.50" height="64.70" rx="5" ry="5" fill="url(#hClo)" stroke="#0a0a0a" stroke-width="1.8"/><rect x="330.70" y="91.00" width="8.00" height="22.00" fill="#fff"/><rect x="341.70" y="87.00" width="6.00" height="31.00" fill="#fff"/><text transform="translate(337.20,102.00) rotate(-90)" text-anchor="middle" font-size="6.8" fill="#000" textLength="20" lengthAdjust="spacingAndGlyphs" stroke="#000" stroke-width="0.25">Closet</text><text transform="translate(347.00,102.50) rotate(-90)" text-anchor="middle" font-size="5.2" fill="#000" textLength="29" lengthAdjust="spacingAndGlyphs" font-weight="bold">900 x 2 600</text><rect x="458.30" y="69.90" width="17.50" height="64.70" rx="5" ry="5" fill="url(#hClo)" stroke="#0a0a0a" stroke-width="1.8"/><rect x="456.90" y="91.00" width="8.00" height="22.00" fill="#fff"/><rect x="467.90" y="87.00" width="6.00" height="31.00" fill="#fff"/><text transform="translate(463.40,102.00) rotate(-90)" text-anchor="middle" font-size="6.8" fill="#000" textLength="20" lengthAdjust="spacingAndGlyphs" stroke="#000" stroke-width="0.25">Closet</text><text transform="translate(473.20,102.50) rotate(-90)" text-anchor="middle" font-size="5.2" fill="#000" textLength="29" lengthAdjust="spacingAndGlyphs" font-weight="bold">900 x 2 600</text><rect x="584.50" y="69.90" width="17.50" height="64.70" rx="5" ry="5" fill="url(#hClo)" stroke="#0a0a0a" stroke-width="1.8"/><rect x="583.10" y="91.00" width="8.00" height="22.00" fill="#fff"/><rect x="594.10" y="87.00" width="6.00" height="31.00" fill="#fff"/><text transform="translate(589.60,102.00) rotate(-90)" text-anchor="middle" font-size="6.8" fill="#000" textLength="20" lengthAdjust="spacingAndGlyphs" stroke="#000" stroke-width="0.25">Closet</text><text transform="translate(599.40,102.50) rotate(-90)" text-anchor="middle" font-size="5.2" fill="#000" textLength="29" lengthAdjust="spacingAndGlyphs" font-weight="bold">900 x 2 600</text><rect x="710.40" y="68.90" width="37.70" height="65.70" rx="6" ry="6" fill="url(#hBath)" stroke="#0a0a0a" stroke-width="1.8"/><rect x="713.00" y="87.00" width="13.00" height="30.00" fill="#fff"/><rect x="730.00" y="70.00" width="13.00" height="68.00" fill="#fff"/><line x1="727.50" y1="88.00" x2="727.50" y2="116.00" stroke="#666" stroke-width="1" stroke-dasharray="1 3"/><text transform="translate(723.30,102.00) rotate(-90)" text-anchor="middle" font-size="13.5" fill="#222" textLength="27" lengthAdjust="spacingAndGlyphs">Bath</text><text transform="translate(740.00,103.50) rotate(-90)" text-anchor="middle" font-size="11.5" fill="#222" textLength="65" lengthAdjust="spacingAndGlyphs">1 500 x 2 700</text><rect x="755.40" y="68.90" width="37.70" height="65.70" rx="6" ry="6" fill="url(#hBath)" stroke="#0a0a0a" stroke-width="1.8"/><rect x="758.00" y="87.00" width="13.00" height="30.00" fill="#fff"/><rect x="775.00" y="70.00" width="13.00" height="68.00" fill="#fff"/><line x1="772.50" y1="88.00" x2="772.50" y2="116.00" stroke="#666" stroke-width="1" stroke-dasharray="1 3"/><text transform="translate(768.30,102.00) rotate(-90)" text-anchor="middle" font-size="13.5" fill="#222" textLength="27" lengthAdjust="spacingAndGlyphs">Bath</text><text transform="translate(785.00,103.50) rotate(-90)" text-anchor="middle" font-size="11.5" fill="#222" textLength="65" lengthAdjust="spacingAndGlyphs">1 500 x 2 700</text><rect x="800.40" y="68.90" width="37.70" height="65.70" rx="6" ry="6" fill="url(#hBath)" stroke="#0a0a0a" stroke-width="1.8"/><rect x="803.00" y="87.00" width="13.00" height="30.00" fill="#fff"/><rect x="820.00" y="70.00" width="13.00" height="68.00" fill="#fff"/><line x1="817.50" y1="88.00" x2="817.50" y2="116.00" stroke="#666" stroke-width="1" stroke-dasharray="1 3"/><text transform="translate(813.30,102.00) rotate(-90)" text-anchor="middle" font-size="13.5" fill="#222" textLength="27" lengthAdjust="spacingAndGlyphs">Bath</text><text transform="translate(830.00,103.50) rotate(-90)" text-anchor="middle" font-size="11.5" fill="#222" textLength="65" lengthAdjust="spacingAndGlyphs">1 500 x 2 700</text><rect x="845.40" y="83.40" width="37.70" height="51.20" rx="6" ry="6" fill="url(#hLau)" stroke="#0a0a0a" stroke-width="1.8"/><rect x="846.50" y="84.50" width="16.00" height="49.00" fill="#fff"/><rect x="864.50" y="77.00" width="13.50" height="66.00" fill="#fff"/><line x1="863.50" y1="85.00" x2="863.50" y2="133.00" stroke="#666" stroke-width="1" stroke-dasharray="1 3"/><text transform="translate(859.20,108.00) rotate(-90)" text-anchor="middle" font-size="13.5" fill="#222" textLength="48.5" lengthAdjust="spacingAndGlyphs">Laundry</text><text transform="translate(875.70,110.30) rotate(-90)" text-anchor="middle" font-size="11.5" fill="#222" textLength="63" lengthAdjust="spacingAndGlyphs">1 500 x 2 100</text><rect x="111.90" y="148.90" width="114.70" height="87.20" rx="4.5" ry="4.5" fill="url(#hLiv)" stroke="#0a0a0a" stroke-width="1.8"/><rect x="149.25" y="176.90" width="37.00" height="15.00" fill="#fff"/><rect x="132.50" y="191.90" width="70.50" height="14.60" fill="#fff"/><line x1="152.25" y1="191.90" x2="183.25" y2="191.90" stroke="#666" stroke-width="1" stroke-dasharray="1 3"/><text x="167.75" y="187.90" text-anchor="middle" font-size="13.5" fill="#222" textLength="31" lengthAdjust="spacingAndGlyphs">Living</text><text x="167.75" y="203.50" text-anchor="middle" font-size="11.5" fill="#222" textLength="64.5" lengthAdjust="spacingAndGlyphs">4 800 x 3 600</text><rect x="111.90" y="250.40" width="114.70" height="87.20" rx="4.5" ry="4.5" fill="url(#hFam)" stroke="#0a0a0a" stroke-width="1.8"/><rect x="146.25" y="278.20" width="43.00" height="15.00" fill="#fff"/><rect x="132.50" y="293.20" width="70.50" height="14.80" fill="#fff"/><line x1="149.25" y1="293.20" x2="186.25" y2="293.20" stroke="#666" stroke-width="1" stroke-dasharray="1 3"/><text x="167.75" y="289.20" text-anchor="middle" font-size="13.5" fill="#222" textLength="37" lengthAdjust="spacingAndGlyphs">Family</text><text x="167.75" y="305.00" text-anchor="middle" font-size="11.5" fill="#222" textLength="64.5" lengthAdjust="spacingAndGlyphs">4 800 x 3 600</text><rect x="111.90" y="352.40" width="93.20" height="72.00" rx="4.5" ry="4.5" fill="url(#hDin)" stroke="#0a0a0a" stroke-width="1.8"/><rect x="136.75" y="372.30" width="40.50" height="15.00" fill="#fff"/><rect x="121.75" y="387.30" width="70.50" height="15.00" fill="#fff"/><line x1="139.75" y1="387.30" x2="174.25" y2="387.30" stroke="#666" stroke-width="1" stroke-dasharray="1 3"/><text x="157.00" y="383.30" text-anchor="middle" font-size="13.5" fill="#222" textLength="34.5" lengthAdjust="spacingAndGlyphs">Dining</text><text x="157.00" y="399.30" text-anchor="middle" font-size="11.5" fill="#222" textLength="64.5" lengthAdjust="spacingAndGlyphs">3 900 x 3 000</text><rect x="111.90" y="440.40" width="93.20" height="71.20" rx="4.5" ry="4.5" fill="url(#hKit)" stroke="#0a0a0a" stroke-width="1.8"/><rect x="133.00" y="460.30" width="48.00" height="15.00" fill="#fff"/><rect x="121.75" y="475.30" width="70.50" height="15.00" fill="#fff"/><line x1="136.00" y1="475.30" x2="178.00" y2="475.30" stroke="#666" stroke-width="1" stroke-dasharray="1 3"/><text x="157.00" y="471.30" text-anchor="middle" font-size="13.5" fill="#222" textLength="42" lengthAdjust="spacingAndGlyphs">Kitchen</text><text x="157.00" y="487.30" text-anchor="middle" font-size="11.5" fill="#222" textLength="64.5" lengthAdjust="spacingAndGlyphs">3 900 x 3 000</text><rect x="515.90" y="165.90" width="158.50" height="158.20" rx="4.5" ry="4.5" fill="url(#hGar)" stroke="#0a0a0a" stroke-width="1.8"/><rect x="569.00" y="228.00" width="48.00" height="17.00" fill="#fff"/><rect x="558.00" y="245.00" width="71.00" height="16.00" fill="#fff"/><text x="593.00" y="240.80" text-anchor="middle" font-size="13.5" fill="#404040" textLength="41" lengthAdjust="spacingAndGlyphs">Garage</text><text x="593.50" y="256.90" text-anchor="middle" font-size="11.5" fill="#404040" textLength="64.5" lengthAdjust="spacingAndGlyphs">6 600 x 6 600</text><rect x="111.90" y="527.90" width="44.20" height="28.20" rx="6" ry="6" fill="url(#hEnt)" stroke="#0a0a0a" stroke-width="1.8"/><rect x="118.00" y="525.00" width="31.50" height="15.00" fill="#fff"/><rect x="98.00" y="540.00" width="69.00" height="15.50" fill="#fff"/><text x="133.50" y="536.80" text-anchor="middle" font-size="13.5" fill="#222" textLength="30" lengthAdjust="spacingAndGlyphs">Entry</text><text x="132.50" y="552.20" text-anchor="middle" font-size="11.5" fill="#222" textLength="64.5" lengthAdjust="spacingAndGlyphs">1 800 x 1 200</text><rect x="170.40" y="528.90" width="25.40" height="69.90" rx="6" ry="6" fill="url(#hHall)" stroke="#0a0a0a" stroke-width="1.8"/><rect x="166.00" y="553.00" width="14.00" height="24.00" fill="#fff"/><rect x="184.00" y="534.50" width="16.00" height="66.50" fill="#fff"/><text transform="translate(177.80,565.00) rotate(-90)" text-anchor="middle" font-size="13.5" fill="#222" textLength="20.5" lengthAdjust="spacingAndGlyphs">Hall</text><text transform="translate(195.00,566.50) rotate(-90)" text-anchor="middle" font-size="11.5" fill="#222" textLength="65" lengthAdjust="spacingAndGlyphs">1 000 x 2 900</text><rect x="112.40" y="567.90" width="43.40" height="16.90" rx="5" ry="5" fill="url(#hClo)" stroke="#0a0a0a" stroke-width="1.8"/><rect x="123.00" y="566.00" width="22.00" height="8.50" fill="#fff"/><rect x="118.00" y="575.50" width="32.00" height="6.50" fill="#fff"/><text x="134.00" y="573.50" text-anchor="middle" font-size="7.5" fill="#000" textLength="20.5" lengthAdjust="spacingAndGlyphs" stroke="#000" stroke-width="0.25">Closet</text><text x="134.00" y="581.50" text-anchor="middle" font-size="5.5" fill="#000" textLength="28" lengthAdjust="spacingAndGlyphs" font-weight="bold">1 300 x 600</text><rect x="112.40" y="596.10" width="43.40" height="16.90" rx="5" ry="5" fill="url(#hClo)" stroke="#0a0a0a" stroke-width="1.8"/><rect x="123.00" y="594.20" width="22.00" height="8.50" fill="#fff"/><rect x="118.00" y="603.70" width="32.00" height="6.50" fill="#fff"/><text x="134.00" y="601.70" text-anchor="middle" font-size="7.5" fill="#000" textLength="20.5" lengthAdjust="spacingAndGlyphs" stroke="#000" stroke-width="0.25">Closet</text><text x="134.00" y="609.70" text-anchor="middle" font-size="5.5" fill="#000" textLength="28" lengthAdjust="spacingAndGlyphs" font-weight="bold">1 300 x 600</text><rect x="111.90" y="623.90" width="115.20" height="62.20" rx="5" ry="5" fill="url(#hBot)" stroke="#0a0a0a" stroke-width="1.8"/></svg></div>
<div class="abs sbtrack" style="left:984px;top:73px;width:16px;height:642px">
 <div class="sbbtn" style="left:0;top:0;width:16px;height:16px"><svg width="14" height="14" viewBox="0 0 14 14" style="position:absolute;left:0;top:0"><path d="M3.5,9 L7,5.5 L10.5,9 Z" fill="#000"/></svg></div>
 <div class="sbbtn" style="left:0;top:296px;width:16px;height:16px"></div>
 <div class="sbbtn" style="left:0;top:626px;width:16px;height:16px"><svg width="14" height="14" viewBox="0 0 14 14" style="position:absolute;left:0;top:0"><path d="M3.5,5.5 L7,9 L10.5,5.5 Z" fill="#000"/></svg></div>
</div>
<div class="abs sbtrack" style="left:34px;top:715px;width:950px;height:16px">
 <div class="sbbtn" style="left:0;top:0;width:16px;height:16px"><svg width="14" height="14" viewBox="0 0 14 14" style="position:absolute;left:0;top:0"><path d="M8.5,3.5 L5,7 L8.5,10.5 Z" fill="#000"/></svg></div>
 <div class="sbbtn" style="left:427px;top:0;width:16px;height:16px"></div>
 <div class="sbbtn" style="left:935px;top:0;width:15px;height:16px"><svg width="14" height="14" viewBox="0 0 14 14" style="position:absolute;left:0;top:0"><path d="M5,3.5 L8.5,7 L5,10.5 Z" fill="#000"/></svg></div>
</div>
<div class="abs" style="left:984px;top:715px;width:16px;height:16px;background:#d4d0c8"></div>
<div class="abs" style="left:33px;top:715px;width:1px;height:16px;background:#000"></div>
<div class="abs" style="left:885px;top:71px;width:115px;height:1px;background:#f2f0ec"></div>
<div id="status" class="abs">
 <div class="pane" style="left:1px;width:534px"></div>
 <div class="pane" style="left:537px;width:168px"><span>Select Objects</span></div>
 <div class="pane" style="left:707px;width:97px"><span>Floor: 1</span></div>
 <div class="pane" style="left:806px;width:192px"></div>
</div>
</div></body></html>
